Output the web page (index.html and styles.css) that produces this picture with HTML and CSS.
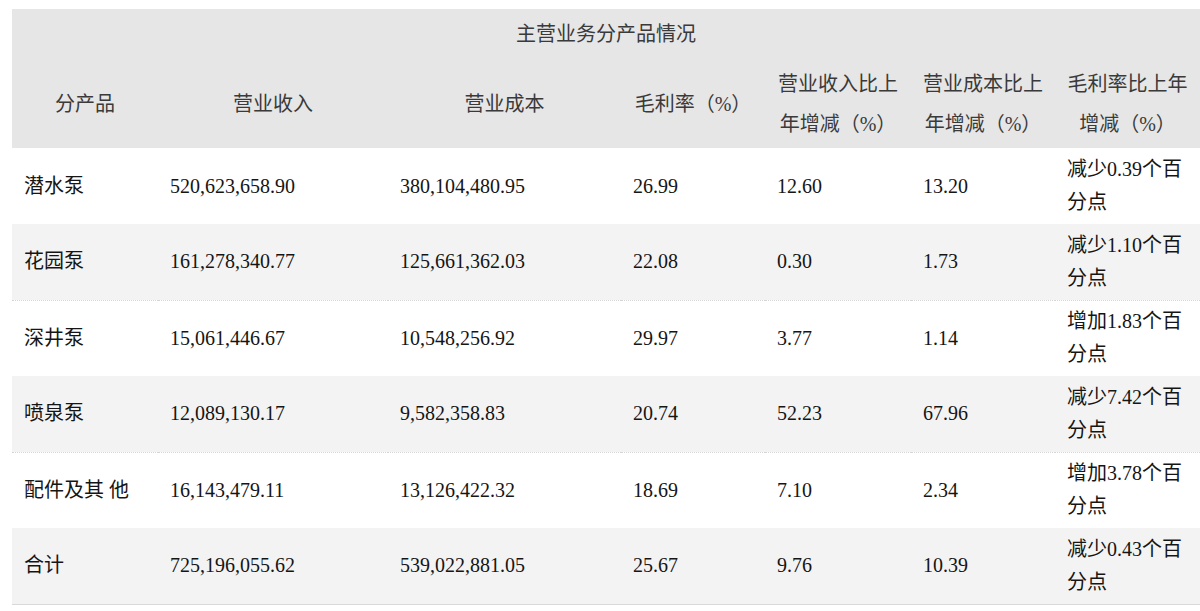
FILE: index.html
```html
<!DOCTYPE html>
<html lang="zh-CN">
<head>
<meta charset="utf-8">
<title>主营业务分产品情况</title>
<link rel="stylesheet" href="styles.css">
</head>
<body>
<div class="wrap">
<table class="report">
  <colgroup>
    <col class="c1"><col class="c2"><col class="c3"><col class="c4"><col class="c5"><col class="c6"><col class="c7">
  </colgroup>
  <thead>
    <tr class="title-row"><th colspan="7">主营业务分产品情况</th></tr>
    <tr class="head-row">
      <th>分产品</th>
      <th>营业收入</th>
      <th>营业成本</th>
      <th>毛利率（%）</th>
      <th>营业收入比上年增减（%）</th>
      <th>营业成本比上年增减（%）</th>
      <th>毛利率比上年增减（%）</th>
    </tr>
  </thead>
  <tbody>
    <tr><td>潜水泵</td><td>520,623,658.90</td><td>380,104,480.95</td><td>26.99</td><td>12.60</td><td>13.20</td><td>减少0.39个百分点</td></tr>
    <tr class="alt dotted"><td>花园泵</td><td>161,278,340.77</td><td>125,661,362.03</td><td>22.08</td><td>0.30</td><td>1.73</td><td>减少1.10个百分点</td></tr>
    <tr><td>深井泵</td><td>15,061,446.67</td><td>10,548,256.92</td><td>29.97</td><td>3.77</td><td>1.14</td><td>增加1.83个百分点</td></tr>
    <tr class="alt dotted"><td>喷泉泵</td><td>12,089,130.17</td><td>9,582,358.83</td><td>20.74</td><td>52.23</td><td>67.96</td><td>减少7.42个百分点</td></tr>
    <tr><td>配件及其 他</td><td>16,143,479.11</td><td>13,126,422.32</td><td>18.69</td><td>7.10</td><td>2.34</td><td>增加3.78个百分点</td></tr>
    <tr class="alt last"><td>合计</td><td>725,196,055.62</td><td>539,022,881.05</td><td>25.67</td><td>9.76</td><td>10.39</td><td>减少0.43个百分点</td></tr>
  </tbody>
</table>
</div>
</body>
</html>
```

FILE: styles.css
```css
html, body {
  margin: 0;
  padding: 0;
  background: #ffffff;
}
.wrap {
  padding: 9px 0 0 12px;
}
.report {
  width: 1188px;
  border-collapse: collapse;
  table-layout: fixed;
  font-family: "Liberation Serif", "Noto Sans CJK SC", serif;
  font-size: 20px;
  color: #151515;
}
.c1 { width: 146px; }
.c2 { width: 230px; }
.c3 { width: 233px; }
.c4 { width: 144px; }
.c5 { width: 146px; }
.c6 { width: 144px; }
.c7 { width: 145px; }

.report thead th {
  background: #e6e6e6;
  color: #3a3a3a;
  font-weight: normal;
  text-align: center;
  padding: 0 10px;
}
.title-row th {
  height: 51px;
  line-height: 51px;
}
.head-row th {
  height: 88px;
  line-height: 40px;
  padding: 6px 10px 2px;
  box-sizing: border-box;
}
.report td {
  height: 76px;
  padding: 3px 8px 3px 12px;
  line-height: 33px;
  box-sizing: border-box;
  vertical-align: middle;
  text-align: left;
}
.report tr.alt td {
  background: #f3f3f3;
}
.report tr.dotted td {
  border-bottom: 1px dotted #d6d6d6;
}
.report tr.last td {
  border-bottom: 1px solid #d9d9d9;
}
```
